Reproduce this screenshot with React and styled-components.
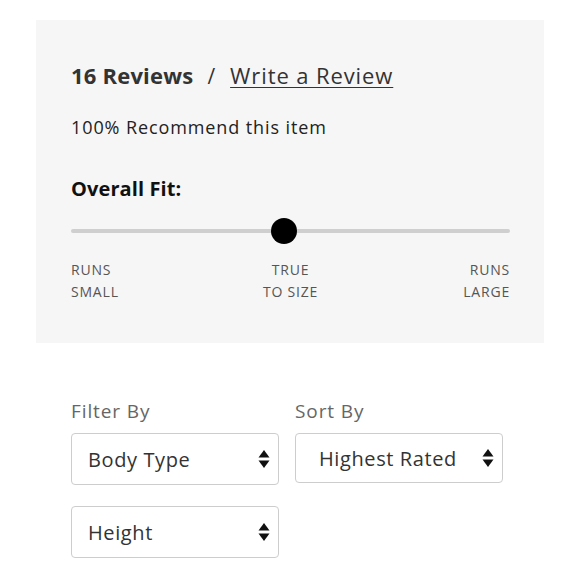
import React from 'react';
import styled, { createGlobalStyle } from 'styled-components';

const GlobalStyle = createGlobalStyle`
  body {
    margin: 0;
    background: #fff;
    font-family: "Open Sans", Lato, sans-serif;
    color: #222;
  }
`;

const Page = styled.div`
  width: 580px;
  padding-top: 20px;
`;

const Panel = styled.section`
  margin: 0 36px;
  background: #f6f6f6;
  padding: 41px 34px 40px 35px;
`;

const Heading = styled.div`
  display: flex;
  align-items: baseline;
  font-size: 22px;
  line-height: 28px;
  color: #333;
`;

const Count = styled.span`
  font-weight: 700;
  letter-spacing: 0.2px;
`;

const Slash = styled.span`
  margin: 0 15px 0 14px;
  font-size: 21px;
`;

const WriteLink = styled.a`
  color: #333;
  font-size: 22px;
  letter-spacing: 0.9px;
  text-decoration: underline;
  text-underline-offset: 3px;
  text-decoration-thickness: 1px;
  cursor: pointer;
`;

const Recommend = styled.p`
  margin: 25px 0 0;
  font-size: 18px;
  line-height: 24px;
  letter-spacing: 0.9px;
  color: #222;
`;

const FitTitle = styled.h3`
  margin: 37px 0 0;
  font-size: 20px;
  line-height: 26px;
  letter-spacing: 0.1px;
  font-weight: 700;
  color: #111;
`;

const Track = styled.div`
  position: relative;
  height: 4px;
  margin-top: 27px;
  background: #cfcfcf;
  border-radius: 2px;
`;

const Thumb = styled.div`
  position: absolute;
  top: 50%;
  width: 26px;
  height: 26px;
  border-radius: 50%;
  background: #000;
  transform: translate(-50%, -50%);
`;

const Scale = styled.div`
  display: grid;
  grid-template-columns: 1fr 1fr 1fr;
  margin-top: 26px;
`;

const ScaleLabel = styled.div`
  font-size: 14px;
  line-height: 22px;
  letter-spacing: 0.8px;
  color: #555;
  text-transform: uppercase;
  text-align: ${(p) => p.$align};
`;

const Filters = styled.div`
  display: grid;
  grid-template-columns: 208px 208px;
  column-gap: 16px;
  padding: 57px 0 0 71px;
`;

const Group = styled.div`
  display: flex;
  flex-direction: column;
  gap: 21px;
`;

const Label = styled.div`
  font-size: 19px;
  line-height: 22px;
  letter-spacing: 0.9px;
  color: #666;
  margin-bottom: -10px;
`;

const Select = styled.div`
  box-sizing: border-box;
  height: ${(p) => p.$h || 52}px;
  display: flex;
  align-items: center;
  justify-content: space-between;
  padding: 0 8px 0 ${(p) => p.$pad || 16}px;
  border: 1px solid #cdcdcd;
  border-radius: 4px;
  background: #fff;
  font-size: 20px;
  letter-spacing: 0.6px;
  color: #333;
`;

const Arrows = () => (
  <svg width="12" height="20" viewBox="0 0 12 20">
    <path d="M6 1 L11.5 8.5 H0.5 Z" fill="#111" />
    <path d="M6 19 L11.5 11.5 H0.5 Z" fill="#111" />
  </svg>
);

const App = () => (
  <Page>
    <GlobalStyle />
    <Panel>
      <Heading>
        <Count>16 Reviews</Count>
        <Slash>/</Slash>
        <WriteLink>Write a Review</WriteLink>
      </Heading>
      <Recommend>100% Recommend this item</Recommend>
      <FitTitle>Overall Fit:</FitTitle>
      <Track>
        <Thumb style={{ left: `${(213 / 440) * 100}%` }} />
      </Track>
      <Scale>
        <ScaleLabel $align="left">Runs<br />Small</ScaleLabel>
        <ScaleLabel $align="center">True<br />To Size</ScaleLabel>
        <ScaleLabel $align="right">Runs<br />Large</ScaleLabel>
      </Scale>
    </Panel>
    <Filters>
      <Group>
        <Label>Filter By</Label>
        <Select>Body Type<Arrows /></Select>
        <Select>Height<Arrows /></Select>
      </Group>
      <Group>
        <Label>Sort By</Label>
        <Select $h={50} $pad={23}>Highest Rated<Arrows /></Select>
      </Group>
    </Filters>
  </Page>
);

export default App;
